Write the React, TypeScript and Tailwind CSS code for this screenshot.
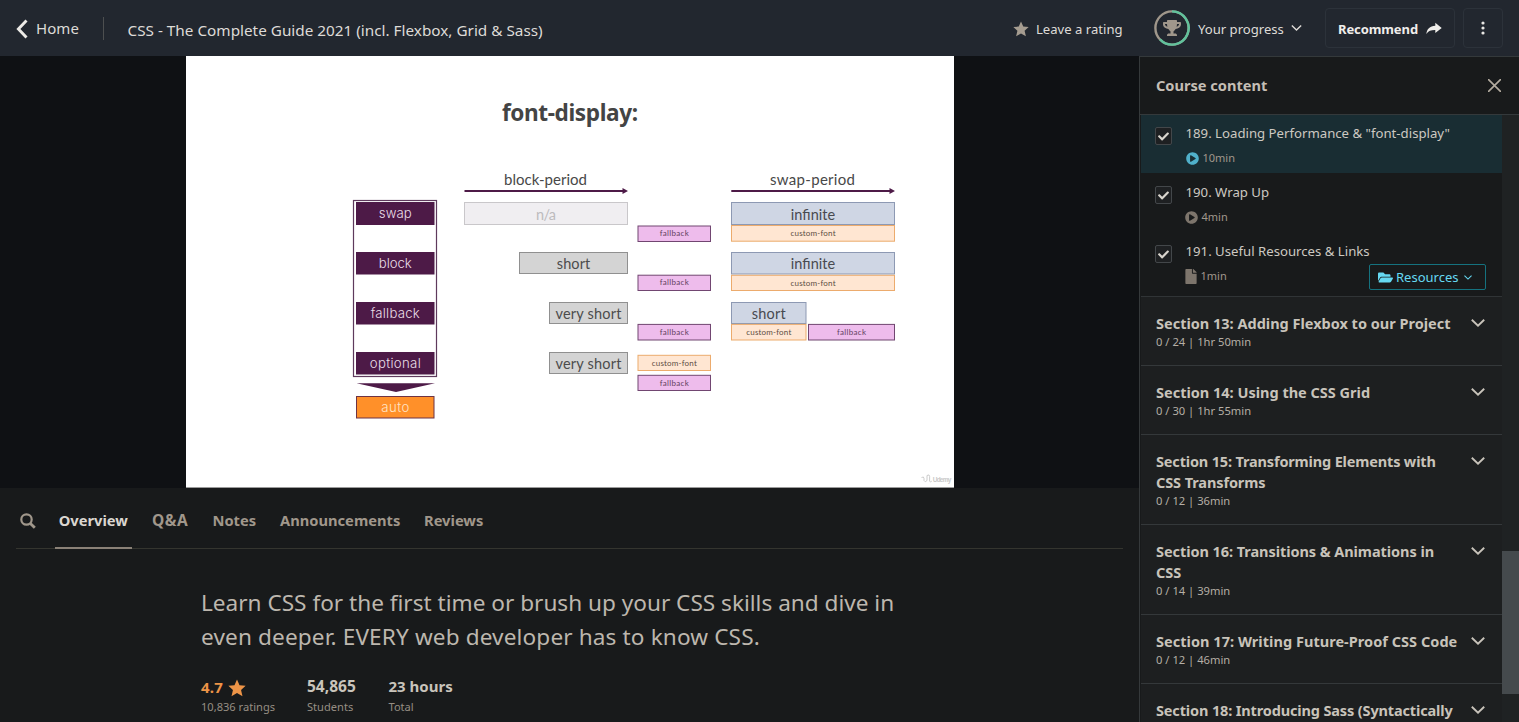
import type { ReactNode } from "react";
import { FaCheck, FaFile, FaFolderOpen, FaPlayCircle, FaTrophy } from "react-icons/fa";

function Chevron({ className }: { className?: string }) {
  return (
    <svg viewBox="0 0 14 8" className={className} fill="none" stroke="currentColor" strokeWidth="1.9">
      <path d="M0.8 0.8 L7 6.7 L13.2 0.8" />
    </svg>
  );
}

function Star({ className }: { className?: string }) {
  return (
    <svg viewBox="0 0 20 20" className={className} fill="currentColor">
      <path d="M10 0.6 L12.8 7 L19.6 7.6 L14.5 12.2 L16.1 19.2 L10 15.6 L3.9 19.2 L5.5 12.2 L0.4 7.6 L7.2 7 Z" />
    </svg>
  );
}

function Header() {
  return (
    <header className="flex h-14 shrink-0 items-center bg-[#22272f] text-[#dedbd7]">
      <a className="flex items-center pt-px pl-4">
        <svg viewBox="0 0 12 20" className="h-5 w-3" fill="none" stroke="#eceae6" strokeWidth="2.9">
          <path d="M10.5 1.5 L2.4 10 L10.5 18.5" />
        </svg>
        <span className="ml-2 text-[15px] tracking-[0.08px]">Home</span>
      </a>
      <div className="ml-6 h-[23px] w-px bg-[#4d4f50]" />
      <h1 className="mt-1 ml-[23.5px] flex-1 text-[15.3px] whitespace-nowrap">CSS - The Complete Guide 2021 (incl. Flexbox, Grid &amp; Sass)</h1>
      <div className="flex items-center pt-0.5">
        <Star className="size-4 text-[#a59c90]" />
        <span className="mt-px ml-[7px] w-[118px] text-[13.1px] whitespace-nowrap">Leave a rating</span>
      </div>
      <div className="flex items-center">
        <div className="relative flex size-9 items-center justify-center">
          <svg viewBox="0 0 36 36" className="absolute inset-0 size-9" fill="none" strokeWidth="2.4">
            <circle cx="18" cy="18" r="16.6" stroke="#a0978b" />
            <path d="M18 1.4 A16.6 16.6 0 1 1 6 29.4" stroke="#61c29c" />
          </svg>
          <FaTrophy className="relative size-[18px] text-[#a0978b]" />
        </div>
        <span className="mt-[3px] ml-2 w-[86px] text-[13.1px] whitespace-nowrap">Your progress</span>
        <Chevron className="ml-[7px] h-[6px] w-[11px]" />
      </div>
      <button className="ml-[23px] flex h-10 w-[130px] items-center rounded-[4px] border border-[#2c323a] pl-3 text-[#f0eeeb]">
        <span className="mt-[3px] w-[88px] text-left text-[13px] font-bold tracking-[-0.1px]">Recommend</span>
        <svg viewBox="0 0 16 13" className="h-[13px] w-4" fill="currentColor">
          <path d="M9.3 0.8 L15.7 5.9 L9.3 11 V8 C5.5 7.9 2.4 8.8 0.4 12 C0.8 7.2 3.8 4.2 9.3 3.8 Z" />
        </svg>
      </button>
      <button className="mr-4 ml-2 flex h-10 w-10 items-center justify-center rounded-[4px] border border-[#2c323a]">
        <svg viewBox="0 0 4 14" className="h-[14px] w-1" fill="#e8e6e3">
          <circle cx="2" cy="2" r="1.6" />
          <circle cx="2" cy="7" r="1.6" />
          <circle cx="2" cy="12" r="1.6" />
        </svg>
      </button>
    </header>
  );
}

type Box = { x: number; y: number; w: number; h: number; kind: keyof typeof kinds; label: string; tw: number };

const kinds = {
  name: { fill: "#4d1a47", stroke: "#4d1a47", color: "#eadfe8", size: 13.2 },
  auto: { fill: "#ff9029", stroke: "#6d3344", color: "#ffe4c4", size: 13.2 },
  na: { fill: "#f0eef1", stroke: "#c9c7ca", color: "#bdbbbd", size: 14.5 },
  gray: { fill: "#d4d4d4", stroke: "#909090", color: "#4c4c4c", size: 14.5 },
  blue: { fill: "#cfd6e4", stroke: "#8d99b3", color: "#484a50", size: 14.5 },
  font: { fill: "#ffe6d2", stroke: "#ecab6d", color: "#5d4d42", size: 8 },
  pink: { fill: "#eebcec", stroke: "#714671", color: "#63415f", size: 8 },
};

const boxes: Box[] = [
  { x: 356.5, y: 202.5, w: 77.5, h: 22, kind: "name", label: "swap", tw: 33 },
  { x: 356.5, y: 252.5, w: 77.5, h: 21.5, kind: "name", label: "block", tw: 33 },
  { x: 356.5, y: 302.5, w: 77.5, h: 21.5, kind: "name", label: "fallback", tw: 49 },
  { x: 356.5, y: 352.5, w: 77.5, h: 21.5, kind: "name", label: "optional", tw: 51 },
  { x: 356.5, y: 396.5, w: 77.5, h: 21.5, kind: "auto", label: "auto", tw: 28 },
  { x: 464.5, y: 202.5, w: 163, h: 22, kind: "na", label: "n/a", tw: 20 },
  { x: 519.5, y: 252.5, w: 108, h: 21, kind: "gray", label: "short", tw: 33.5 },
  { x: 549.5, y: 302.5, w: 78, h: 21, kind: "gray", label: "very short", tw: 66 },
  { x: 549.5, y: 352.5, w: 78, h: 21, kind: "gray", label: "very short", tw: 66 },
  { x: 638, y: 226, w: 72.5, h: 15.5, kind: "pink", label: "fallback", tw: 29 },
  { x: 638, y: 275.2, w: 72.5, h: 15.3, kind: "pink", label: "fallback", tw: 29 },
  { x: 638, y: 324.4, w: 72.5, h: 15.6, kind: "pink", label: "fallback", tw: 29 },
  { x: 638, y: 355.3, w: 72.5, h: 15.2, kind: "font", label: "custom-font", tw: 45 },
  { x: 638, y: 375.3, w: 72.5, h: 15.2, kind: "pink", label: "fallback", tw: 29 },
  { x: 731.5, y: 202.5, w: 163, h: 22, kind: "blue", label: "infinite", tw: 44.5 },
  { x: 731.5, y: 225.5, w: 163, h: 15.7, kind: "font", label: "custom-font", tw: 45 },
  { x: 731.5, y: 252.5, w: 163, h: 21.5, kind: "blue", label: "infinite", tw: 44.5 },
  { x: 731.5, y: 275.3, w: 163, h: 15.2, kind: "font", label: "custom-font", tw: 45 },
  { x: 731.5, y: 302.5, w: 74.5, h: 21, kind: "blue", label: "short", tw: 34 },
  { x: 731.5, y: 324.4, w: 74.5, h: 15.6, kind: "font", label: "custom-font", tw: 45 },
  { x: 808.5, y: 324.4, w: 86, h: 15.6, kind: "pink", label: "fallback", tw: 29 },
];

function Slide() {
  return (
    <svg viewBox="186 56 768 431" className="h-[432px] w-[768px] border-b border-[#9b9b9b] bg-white [font-family:Lato,sans-serif]" textAnchor="middle">
      <text x="570" y="120.5" fontSize="22.6" textLength="136" fill="#444" className="font-bold [font-family:'Noto_Sans',sans-serif]">font-display:</text>
      <text x="545.5" y="184.5" fontSize="15" textLength="83" fill="#484848">block-period</text>
      <text x="812.5" y="184.5" fontSize="15" textLength="85" fill="#484848">swap-period</text>
      <g fill="#4d1a47">
        <path d="M464.5 190 H622.5 V188 L628 191 L622.5 194 V192 H464.5 Z" />
        <path d="M731.3 190 H889.5 V188 L895 191 L889.5 194 V192 H731.3 Z" />
        <path d="M356.5 383.2 H435 L396 392 Z" />
      </g>
      <rect x="353.5" y="200.5" width="83" height="176" fill="none" stroke="#5e3a5c" strokeWidth="1.2" />
      {boxes.map((b, i) => {
        const k = kinds[b.kind];
        const small = k.size < 10;
        const name = b.kind === "name" || b.kind === "auto";
        return (
          <g key={i}>
            <rect x={b.x} y={b.y} width={b.w} height={b.h} fill={k.fill} stroke={k.stroke} strokeWidth="1" />
            <text
              x={b.kind === "na" ? 546 : b.x + b.w / 2}
              y={b.y + b.h / 2 + (small ? 2.6 : name ? 4.6 : 6)}
              fontSize={k.size}
              textLength={b.tw}
              fill={k.color}
              className={name ? "font-light [font-family:Inter,sans-serif]" : ""}
            >
              {b.label}
            </text>
          </g>
        );
      })}
      <g fill="none" stroke="#c6c6c6">
        <path d="M921.5 477.5 q2.5 -1.5 2.5 1 v2 q1 2.5 3 0 v-5 M927 475.5 q2.6 -1.5 2.6 0.8 v5 q1.2 1.2 2.2 -0.2" strokeWidth="0.9" />
        <text x="942" y="481.5" fontSize="6.5" textLength="18.5" fill="#c9c9c9" stroke="none" className="font-bold [font-family:'Liberation_Sans',sans-serif]">Udemy</text>
      </g>
    </svg>
  );
}

function Tabs() {
  return (
    <nav className="mx-4 flex h-[61px] border-b border-[#34352f] text-[14.7px] font-bold text-[#a0978b]">
      <div className="flex w-[38.5px] items-center pt-[5px] pl-1">
        <svg viewBox="0 0 16 16" className="size-4" fill="none" stroke="currentColor" strokeWidth="2.2">
          <circle cx="6.5" cy="6.5" r="5.2" />
          <path d="M10.4 10.4 L14.8 14.8" strokeWidth="2.8" />
        </svg>
      </div>
      <div className="-mb-px flex w-[77.5px] items-center justify-center border-b-2 border-[#8a8177] pt-[6px] text-[#dad6d0]">Overview</div>
      <div className="flex items-center gap-6 pt-[5px] pl-5">
        <span className="w-[36.5px] text-[15.5px] tracking-[0.6px]">Q&amp;A</span>
        <span className="w-[43.5px]">Notes</span>
        <span className="w-[120px]">Announcements</span>
        <span>Reviews</span>
      </div>
    </nav>
  );
}

function Overview() {
  return (
    <section className="pt-[37px] pl-[201px] text-[#c9c4bb]">
      <p className="text-[22.6px] leading-[33.5px] whitespace-nowrap text-[#bdb7ae]">
        Learn CSS for the first time or brush up your CSS skills and dive in
        <br />
        <span className="tracking-[0.13px]">even deeper. EVERY web developer has to know CSS.</span>
      </p>
      <div className="mt-[22px] flex text-[11.1px] leading-[19px] text-[#968e83]">
        <div className="w-[106px]">
          <div className="flex h-[22px] items-center pt-[3px] text-[15px] font-bold text-[#ed9447]">
            <span className="tracking-[0.2px]">4.7</span>
            <Star className="ml-[5px] size-[18px]" />
          </div>
          10,836 ratings
        </div>
        <div className="w-[81.5px]">
          <div className="h-[22px] text-[15.5px] leading-[22px] font-bold text-[#c9c4bb]">54,865</div>
          Students
        </div>
        <div>
          <div className="h-[22px] text-[15px] leading-[22px] font-bold text-[#c9c4bb]">23 hours</div>
          Total
        </div>
      </div>
    </section>
  );
}

function Lecture({ title, time, active, file, children }: { title: string; time: string; active?: boolean; file?: boolean; children?: ReactNode }) {
  return (
    <div className={`flex shrink-0 pl-[14px] ${active ? "h-[58px] bg-[#192d33] pt-2" : file ? "h-16 pt-[9px]" : "h-[59px] pt-[9px]"}`}>
      <div className="mt-[4px] flex h-[18px] w-[17px] items-center justify-center rounded-[2px] border border-[#43474a] bg-[#1e2022]">
        <FaCheck className="size-[11px] text-[#d8d4cd]" />
      </div>
      <div className="ml-[13.5px] flex-1">
        <div className="h-[21px] text-[13.2px] leading-[21px] whitespace-nowrap text-[#cdc9c2]">{title}</div>
        <div className="flex">
          <div className="mt-[6px] -ml-px flex h-[17px] flex-1 items-center text-[11px] text-[#a0978b]">
            {file ? <FaFile className="h-[15px] w-3 text-[#7d756c]" /> : <FaPlayCircle className={active ? "ml-px size-[13px] text-[#50b0ca]" : "size-[13px] text-[#7d756c]"} />}
            <span className="ml-[4px]">{time}</span>
          </div>
          {children}
        </div>
      </div>
    </div>
  );
}

function Section({ title, meta }: { title: ReactNode; meta?: string }) {
  return (
    <div className="flex shrink-0 border-b border-[#34383a] bg-[#1d1f20] py-4 pl-[15px]">
      <div className="w-[313px] text-[14.5px] leading-[21px] font-bold whitespace-nowrap text-[#c8c3ba]">
        {title}
        <div className="h-[15px] text-[11.2px] leading-[15px] font-normal text-[#b5afa6]">{meta}</div>
      </div>
      <Chevron className="mt-[6px] ml-[2px] h-2 w-[14px] text-[#c8c3ba]" />
    </div>
  );
}

function Sidebar() {
  return (
    <aside className="flex w-[380px] flex-col border-l border-[#35393b] bg-[#181a1b]">
      <div className="flex h-[59px] shrink-0 items-center justify-between border-y border-[#34393b] pr-[18px] pb-px pl-4">
        <h2 className="pt-px text-[14.6px] font-bold text-[#c4beb5]">Course content</h2>
        <svg viewBox="0 0 12 12" className="size-[13px]" stroke="#b3ab9f" strokeWidth="1.5">
          <path d="M0 0 L12 12 M12 0 L0 12" />
        </svg>
      </div>
      <div className="flex min-h-0 flex-1">
        <div className="ml-px flex flex-1 flex-col overflow-hidden">
          <Lecture title={'189. Loading Performance & "font-display"'} time="10min" active />
          <Lecture title="190. Wrap Up" time="4min" />
          <Lecture title="191. Useful Resources & Links" time="1min" file>
            <button className="mt-[2px] mr-4 flex h-[26px] w-[117px] items-center rounded-[2px] border border-[#15727f] pl-2 text-[#66d9f2]">
              <FaFolderOpen className="size-[15px]" />
              <span className="mt-px ml-[3px] text-[13px]">Resources</span>
              <Chevron className="ml-[6px] h-[5px] w-[8px]" />
            </button>
          </Lecture>
          <div className="h-px shrink-0 bg-[#303436]" />
          <Section title="Section 13: Adding Flexbox to our Project" meta="0 / 24 | 1hr 50min" />
          <Section title="Section 14: Using the CSS Grid" meta="0 / 30 | 1hr 55min" />
          <Section
            title={
              <>
                <div className="tracking-[-0.16px]">Section 15: Transforming Elements with</div>
                <div className="tracking-[-0.1px]">CSS Transforms</div>
              </>
            }
            meta="0 / 12 | 36min"
          />
          <Section
            title={
              <>
                <div className="tracking-[-0.06px]">Section 16: Transitions &amp; Animations in</div>
                <div>CSS</div>
              </>
            }
            meta="0 / 14 | 39min"
          />
          <Section title={<div className="tracking-[0.04px]">Section 17: Writing Future-Proof CSS Code</div>} meta="0 / 12 | 46min" />
          <Section title={<div className="tracking-[-0.14px]">Section 18: Introducing Sass (Syntactically</div>} />
        </div>
        <div className="w-[17px] bg-[#1f2223] pt-[436px]">
          <div className="h-[143px] bg-[#454a4d]" />
        </div>
      </div>
    </aside>
  );
}

export default function App() {
  return (
    <div className="flex h-[722px] w-[1519px] flex-col overflow-hidden bg-[#181a1b] font-['Noto_Sans','Open_Sans',sans-serif]">
      <Header />
      <div className="flex min-h-0 flex-1">
        <main className="flex-1">
          <div className="flex h-[432px] bg-[#0f1114] pl-[186px]">
            <Slide />
          </div>
          <Tabs />
          <Overview />
        </main>
        <Sidebar />
      </div>
    </div>
  );
}
